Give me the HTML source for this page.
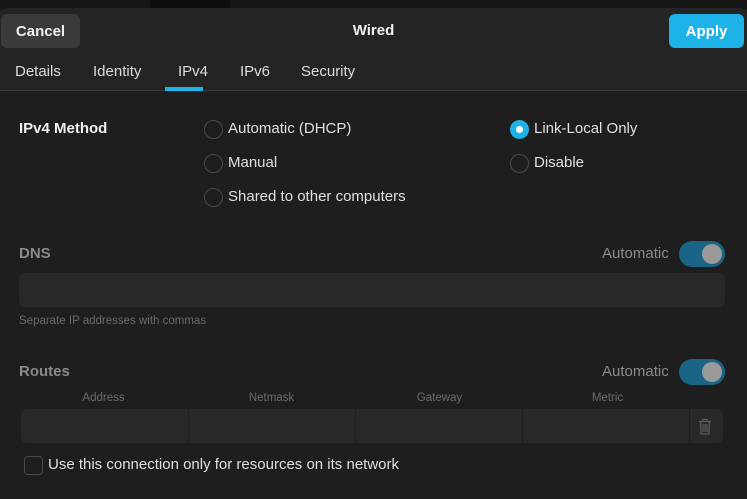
<!DOCTYPE html>
<html><head><meta charset="utf-8"><style>
*{box-sizing:border-box;margin:0;padding:0}
body{width:747px;height:499px;overflow:hidden;background:#1e1e1e;font-family:"Liberation Sans","DejaVu Sans",sans-serif;color:#e8e8e8;position:relative;font-size:15px}
.abs{position:absolute}
.top{left:0;top:0;width:747px;height:9px;background:#161616}
.hdr{left:0;top:8px;width:747px;height:83px;background:#242424;border-radius:8px 8px 0 0;border-bottom:1px solid #3a3a3a}
.btn{height:34px;border-radius:6px;font-weight:bold;font-size:15px;display:flex;align-items:center;justify-content:center}
.tab{top:63px;font-size:15px;color:#dcdcdc}
.radio{width:19px;height:19px;border-radius:50%;border:1.5px solid #4a4a4a}
.lbl{font-size:15px;color:#e0e0e0}
.sw{width:46px;height:26px;border-radius:13px;background:#1a6485}
.sw::after{content:"";position:absolute;right:3px;top:3px;width:20px;height:20px;border-radius:50%;background:#9a9a9a}
.dim{color:#8a8a8a}
.col{top:392px;font-size:11.5px;color:#6a6a6a;width:167px;text-align:center}
</style></head><body>
<div class="abs top"></div>
<div class="abs" style="left:150px;top:0;width:80px;height:8px;background:#0e0e0e"></div>
<div class="abs hdr"></div>
<div class="abs btn" style="left:1px;top:14px;width:79px;background:#3a3a3a;color:#f0f0f0">Cancel</div>
<div class="abs" style="left:0;top:22px;width:747px;text-align:center;font-weight:bold;font-size:15px;color:#f0f0f0">Wired</div>
<div class="abs btn" style="left:669px;top:14px;width:75px;background:#1db2e8;color:#fff">Apply</div>
<div class="abs tab" style="left:15px">Details</div>
<div class="abs tab" style="left:93px">Identity</div>
<div class="abs tab" style="left:178px">IPv4</div>
<div class="abs tab" style="left:240px">IPv6</div>
<div class="abs tab" style="left:301px">Security</div>
<div class="abs" style="left:165px;top:87px;width:38px;height:4px;background:#1db2e8"></div>

<div class="abs" style="left:19px;top:120px;font-weight:bold;font-size:15px;color:#f0f0f0">IPv4 Method</div>
<div class="abs radio" style="left:204px;top:120px"></div><div class="abs lbl" style="left:228px;top:120px">Automatic (DHCP)</div>
<div class="abs radio" style="left:204px;top:154px"></div><div class="abs lbl" style="left:228px;top:154px">Manual</div>
<div class="abs radio" style="left:204px;top:188px"></div><div class="abs lbl" style="left:228px;top:188px">Shared to other computers</div>
<div class="abs radio" style="left:510px;top:120px;background:#1db2e8;border:none"><div class="abs" style="left:6px;top:6px;width:7px;height:7px;border-radius:50%;background:#fff"></div></div>
<div class="abs lbl" style="left:534px;top:120px">Link-Local Only</div>
<div class="abs radio" style="left:510px;top:154px"></div><div class="abs lbl" style="left:534px;top:154px">Disable</div>

<div class="abs dim" style="left:19px;top:245px;font-weight:bold">DNS</div>
<div class="abs dim" style="left:602px;top:245px">Automatic</div>
<div class="abs sw" style="left:679px;top:241px"></div>
<div class="abs" style="left:19px;top:273px;width:706px;height:34px;border-radius:6px;background:#282828"></div>
<div class="abs" style="left:19px;top:315px;font-size:11.5px;color:#6a6a6a">Separate IP addresses with commas</div>

<div class="abs dim" style="left:19px;top:363px;font-weight:bold">Routes</div>
<div class="abs dim" style="left:602px;top:363px">Automatic</div>
<div class="abs sw" style="left:679px;top:359px"></div>
<div class="abs col" style="left:20px">Address</div>
<div class="abs col" style="left:188px">Netmask</div>
<div class="abs col" style="left:356px">Gateway</div>
<div class="abs col" style="left:524px">Metric</div>
<div class="abs" style="left:21px;top:409px;width:702px;height:34px;border-radius:6px;background:#282828"></div>
<div class="abs" style="left:188px;top:409px;width:1px;height:34px;background:#1e1e1e"></div>
<div class="abs" style="left:355px;top:409px;width:1px;height:34px;background:#1e1e1e"></div>
<div class="abs" style="left:522px;top:409px;width:1px;height:34px;background:#1e1e1e"></div>
<div class="abs" style="left:689px;top:409px;width:1px;height:34px;background:#1e1e1e"></div>
<svg class="abs" style="left:698px;top:418px" width="14" height="17" viewBox="0 0 14 17" fill="none" stroke="#5a5a5a" stroke-width="1.3"><path d="M1 3.5h12M5 3.5V1.5h4v2M2.5 3.5l.7 12.5h7.6l.7-12.5M5 6v8M7 6v8M9 6v8"/></svg>
<div class="abs" style="left:24px;top:456px;width:19px;height:19px;border-radius:4px;border:1.5px solid #4a4a4a"></div>
<div class="abs lbl" style="left:48px;top:456px">Use this connection only for resources on its network</div>
</body></html>
